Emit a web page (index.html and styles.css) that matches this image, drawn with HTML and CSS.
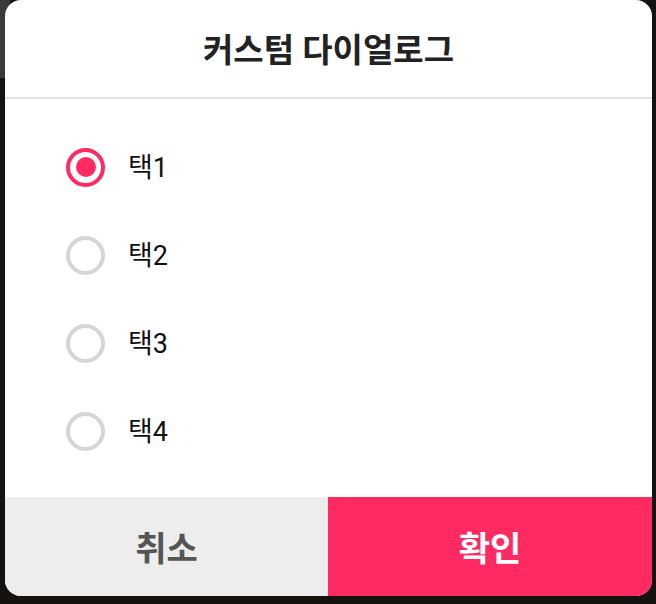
FILE: index.html
```html
<!DOCTYPE html>
<html lang="ko">
<head>
<meta charset="utf-8">
<link rel="stylesheet" href="styles.css">
</head>
<body>
<div class="dialog">
  <div class="header">커스텀 다이얼로그</div>
  <div class="options">
    <label class="option"><span class="radio checked"></span><span class="label">택1</span></label>
    <label class="option"><span class="radio"></span><span class="label">택2</span></label>
    <label class="option"><span class="radio"></span><span class="label">택3</span></label>
    <label class="option"><span class="radio"></span><span class="label">택4</span></label>
  </div>
  <div class="buttons">
    <div class="btn cancel">취소</div>
    <div class="btn ok">확인</div>
  </div>
</div>
</body>
</html>
```
FILE: styles.css
```css
html, body {
  margin: 0;
  padding: 0;
  width: 656px;
  height: 604px;
  overflow: hidden;
}
body {
  background: linear-gradient(#3a3a3a, #3a3a3a) 0 0 / 10px 78px no-repeat, #16120f;
  font-family: "Roboto", "Noto Sans CJK KR", sans-serif;
}
.dialog {
  margin: 0 4px 0 5px;
  width: 647px;
  height: 596px;
  background: #fff;
  border-radius: 16px;
  overflow: hidden;
  display: flex;
  flex-direction: column;
}
.header {
  height: 99px;
  box-sizing: border-box;
  border-bottom: 2px solid #e2e2e2;
  display: flex;
  align-items: center;
  justify-content: center;
  padding-bottom: 2px;
  font-size: 33px;
  font-weight: 700;
  color: #222;
}
.options {
  padding: 24px 0 22px;
  display: flex;
  flex-direction: column;
}
.option {
  height: 88px;
  display: flex;
  align-items: center;
  padding-left: 61px;
}
.radio {
  width: 39px;
  height: 39px;
  box-sizing: border-box;
  border: 4px solid #d5d5d5;
  border-radius: 50%;
  display: flex;
  align-items: center;
  justify-content: center;
}
.radio.checked {
  border-color: #ff2a62;
}
.radio.checked::after {
  content: "";
  width: 20px;
  height: 20px;
  border-radius: 50%;
  background: #ff2a62;
}
.label {
  margin-left: 23px;
  padding-top: 3px;
  font-size: 27px;
  line-height: 1;
  color: #111;
}
.buttons {
  flex: 1;
  display: flex;
}
.btn {
  flex: 1;
  display: flex;
  align-items: center;
  justify-content: center;
  font-size: 34px;
  font-weight: 700;
}
.cancel {
  background: #ededed;
  color: #555;
  flex: 0 0 323px;
}
.ok {
  background: #ff2a62;
  color: #fff;
}
```
